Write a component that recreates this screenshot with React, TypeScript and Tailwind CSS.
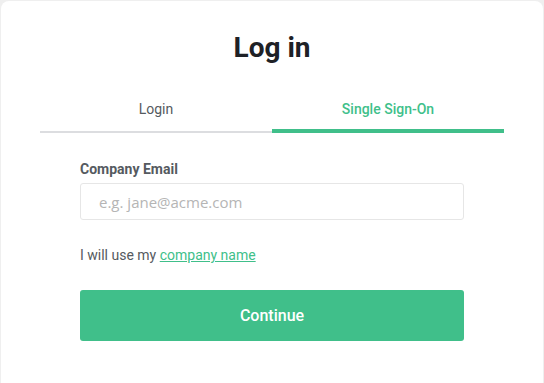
export default function App() {
  return (
    <div className="min-h-screen bg-[#efefef] p-px" style={{ fontFamily: 'Roboto, "Liberation Sans", sans-serif' }}>
      <div className="h-[400px] rounded-lg bg-white px-[39px]">
        <h1 className="pt-[28px] text-center text-[28px] font-bold leading-[38px] text-[#1e2126]">Log in</h1>

        <div className="mt-[32px] flex">
          <button className="flex-1 border-b-2 border-[#dcdde0] pb-[12px] text-[14px] leading-[20px] text-[#555a60]">
            Login
          </button>
          <button className="flex-1 border-b-4 border-[#40bf8a] pb-[10px] text-[14px] font-medium leading-[20px] text-[#40bf8a]">
            Single Sign-On
          </button>
        </div>

        <div className="mx-[40px] mt-[26px]">
          <label className="block text-[14px] font-bold leading-[20px] text-[#555a60]">Company Email</label>
          <input
            type="text"
            placeholder="e.g. jane@acme.com"
            className="mt-[4px] block h-[37px] w-full rounded-[3px] border border-[#e6e6e6] px-[18px] text-[15px] outline-none placeholder:text-[#b5b5b5]"
            style={{ fontFamily: '"Open Sans", sans-serif' }}
          />

          <p className="mt-[25px] text-[14px] leading-[20px] text-[#555a60]">
            I will use my{' '}
            <a href="#" className="text-[#40bf8a] underline">
              company name
            </a>
          </p>

          <button className="mt-[25px] block h-[51px] w-full rounded-[3px] bg-[#40bf8a] text-[16px] font-medium text-white">
            Continue
          </button>
        </div>
      </div>
    </div>
  );
}
